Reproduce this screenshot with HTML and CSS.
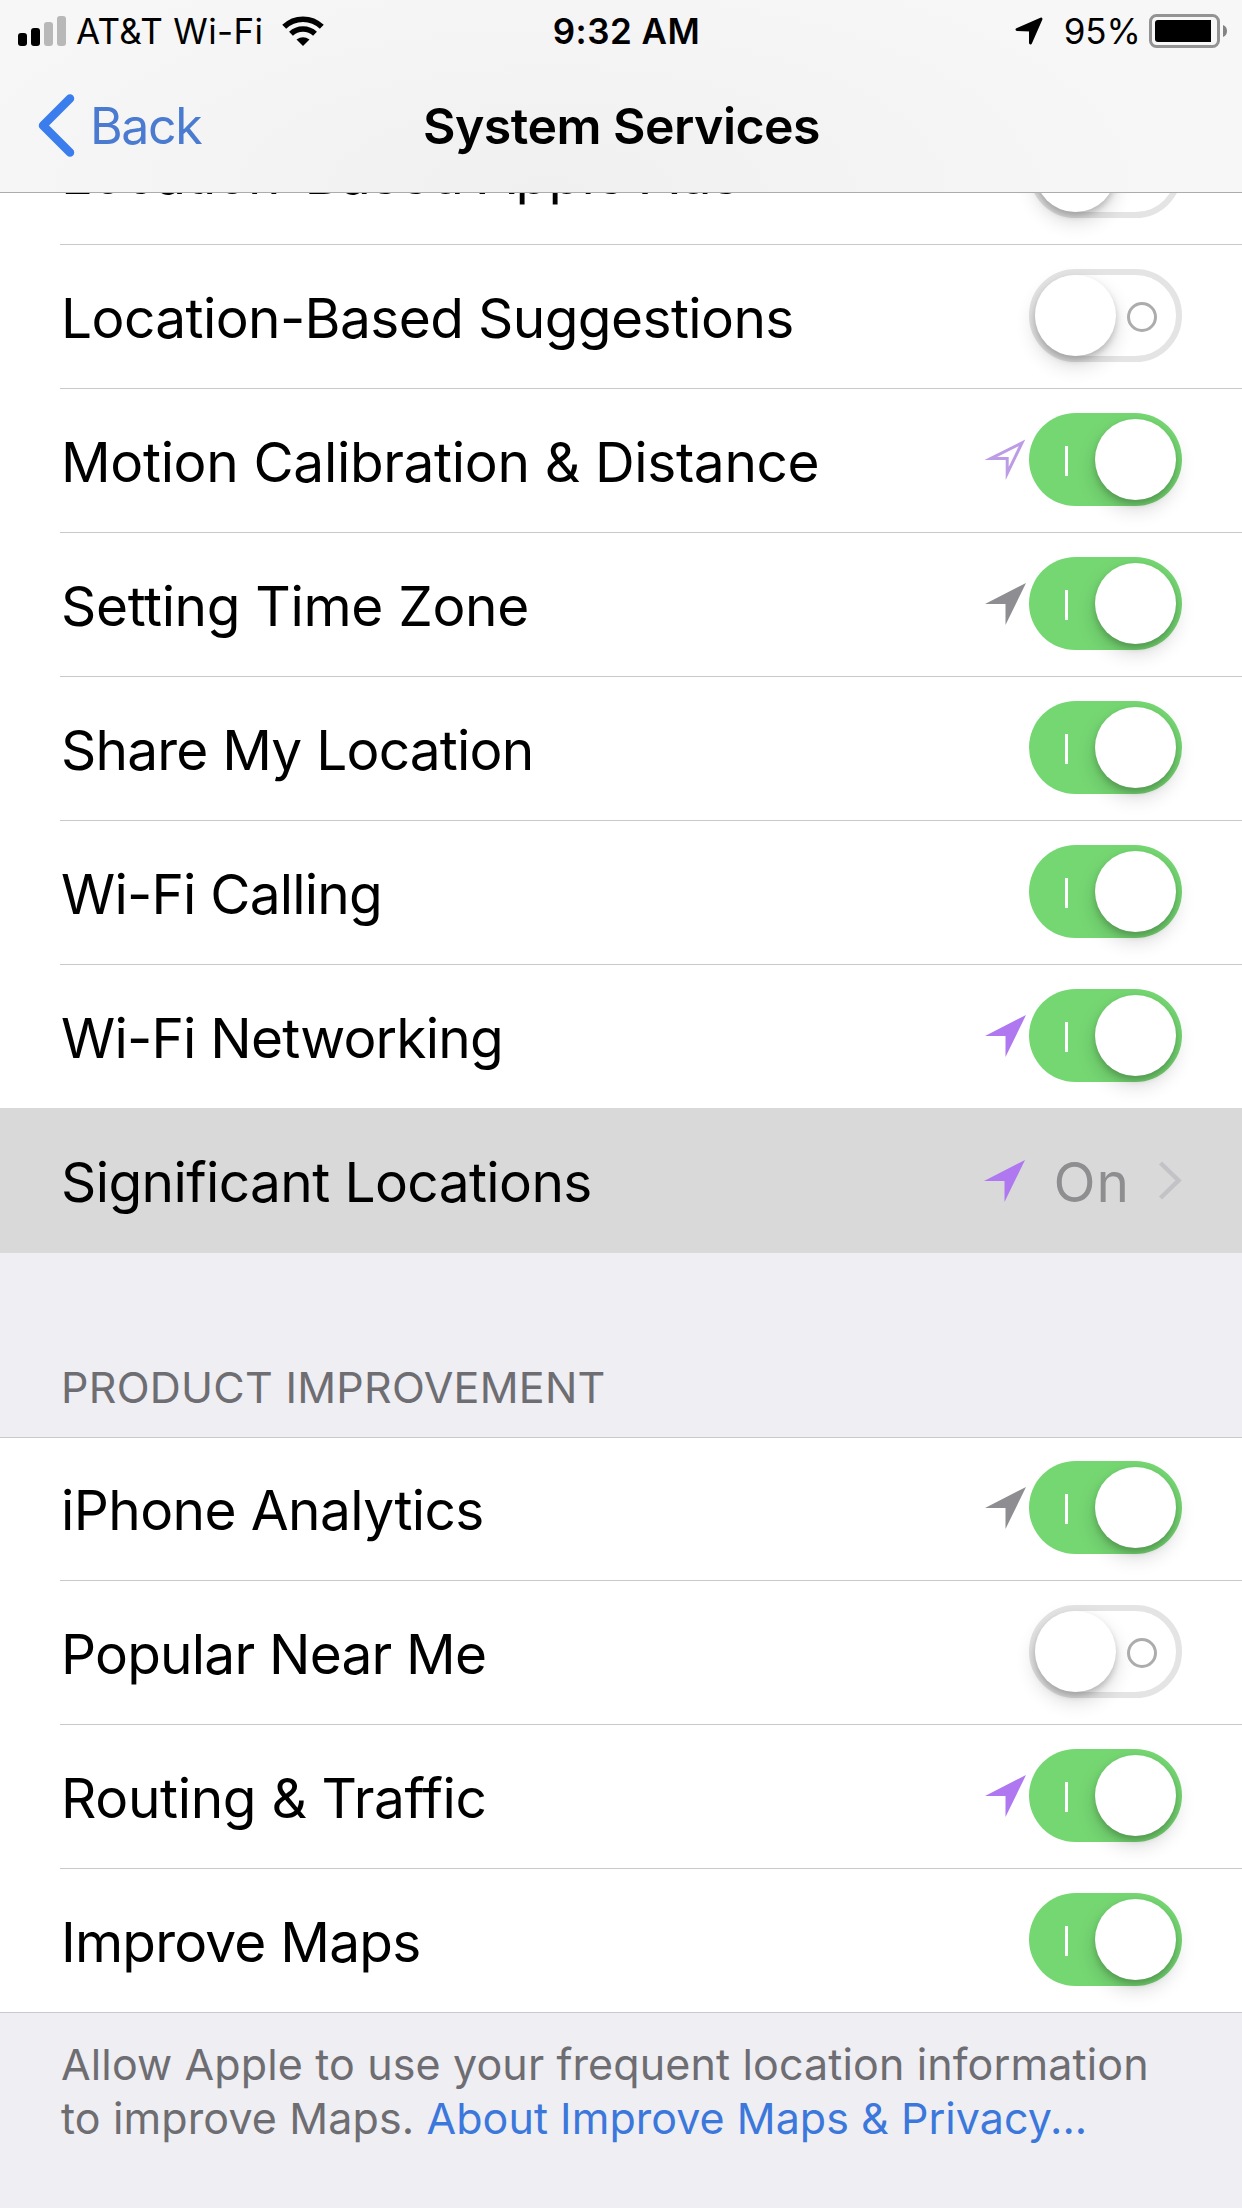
FILE: index.html
```html
<!DOCTYPE html>
<html lang="en">
  <head>
    <meta charset="UTF-8" />
    <meta name="viewport" content="width=device-width, initial-scale=1.0" />
    <title>System Services</title>
    <link rel="stylesheet" href="styles.css">
  </head>

  <body>
    <svg class="defs" width="0" height="0">
      <symbol id="arrow" viewBox="0 0 42 42">
        <path d="M0 21 L41 0 L20.500 42 V21 Z" />
      </symbol>
    </svg>

    <header class="top">
      <div class="status-bar">
        <div class="status-left">
          <svg class="signal" width="49" height="30" viewBox="0 0 49 30">
            <rect x="0" y="17" width="9" height="13" rx="3" />
            <rect x="13" y="12" width="9" height="18" rx="3" />
            <rect x="26" y="6" width="9" height="24" rx="3" fill="#b8b8b8" />
            <rect x="39" y="0" width="9" height="30" rx="3" fill="#b8b8b8" />
          </svg>
          <span class="carrier">AT&amp;T Wi-Fi</span>
          <svg class="wifi" width="42" height="30" viewBox="0 0 42 30">
            <path d="M2.200 10.800 A27 27 0 0 1 39.800 10.800" fill="none" stroke="#000" stroke-width="5.600" />
            <path d="M9 17.800 A17.500 17.500 0 0 1 33 17.800" fill="none" stroke="#000" stroke-width="5.600" />
            <path d="M14.500 23.500 Q21 18.800 27.500 23.500 L21 30 Z" />
          </svg>
        </div>
        <div class="time">9:32 AM</div>
        <div class="status-right">
          <svg class="nav-arrow" width="28" height="28" viewBox="0 0 28 28">
            <path d="M2 12.500 L26 2 L15.500 26 V13 Z" stroke="#000" stroke-width="3" stroke-linejoin="round" />
          </svg>
          <span class="percent">95%</span>
          <svg class="battery" width="79" height="34" viewBox="0 0 79 34">
            <rect x="1.500" y="1.500" width="68" height="31" rx="6" fill="none" stroke="#939393" stroke-width="3" />
            <path d="M9 6 H62 V28 H9 Q6 28 6 25 V9 Q6 6 9 6 Z" />
            <path d="M74 11 Q78 12.500 78 17 Q78 21.500 74 23 Z" fill="#848484" />
          </svg>
        </div>
      </div>
      <div class="nav-bar">
        <a class="back">
          <svg width="37" height="64" viewBox="0 0 37 64">
            <path d="M32 4.500 L5 31.500 L32 58.500" fill="none" stroke="#3b7ded" stroke-width="8.500" stroke-linecap="round" stroke-linejoin="round" />
          </svg>
          <span>Back</span>
        </a>
        <h1>System Services</h1>
      </div>
    </header>

    <main>
      <ul class="list">
        <li class="row">
          <span class="label">Location-Based Apple Ads</span>
          <span class="toggle"></span>
        </li>
        <li class="row">
          <span class="label">Location-Based Suggestions</span>
          <span class="toggle"></span>
        </li>
        <li class="row">
          <span class="label wide">Motion Calibration &amp; Distance</span>
          <svg class="arrow" viewBox="0 0 42 42">
            <path d="M6 19.400 L37 3.900 L22.200 34.500 V19.400 Z" fill="none" stroke="#bd9ce6" stroke-width="3" stroke-miterlimit="10" />
          </svg>
          <span class="toggle on"></span>
        </li>
        <li class="row">
          <span class="label wide">Setting Time Zone</span>
          <svg class="arrow gray"><use href="#arrow" /></svg>
          <span class="toggle on"></span>
        </li>
        <li class="row">
          <span class="label tight">Share My Location</span>
          <span class="toggle on"></span>
        </li>
        <li class="row">
          <span class="label tight">Wi-Fi Calling</span>
          <span class="toggle on"></span>
        </li>
        <li class="row before-selected">
          <span class="label tight">Wi-Fi Networking</span>
          <svg class="arrow purple"><use href="#arrow" /></svg>
          <span class="toggle on"></span>
        </li>
        <li class="row selected">
          <span class="label">Significant Locations</span>
          <svg class="arrow purple"><use href="#arrow" /></svg>
          <span class="value">On</span>
          <svg class="chevron" width="25" height="39" viewBox="0 0 25 39">
            <path d="M2.500 2 L20.500 19.500 L2.500 37" fill="none" stroke="#c3c3c7" stroke-width="4.500" />
          </svg>
        </li>
      </ul>

      <h2 class="section-title">Product Improvement</h2>

      <ul class="list">
        <li class="row">
          <span class="label">iPhone Analytics</span>
          <svg class="arrow gray"><use href="#arrow" /></svg>
          <span class="toggle on"></span>
        </li>
        <li class="row">
          <span class="label tight">Popular Near Me</span>
          <span class="toggle"></span>
        </li>
        <li class="row">
          <span class="label wide">Routing &amp; Traffic</span>
          <svg class="arrow purple"><use href="#arrow" /></svg>
          <span class="toggle on"></span>
        </li>
        <li class="row">
          <span class="label tight">Improve Maps</span>
          <span class="toggle on"></span>
        </li>
      </ul>

      <p class="footnote">
        Allow Apple to use your frequent location information<br />
        to improve Maps. <a>About Improve Maps &amp; Privacy...</a>
      </p>
    </main>
  </body>
</html>
```
FILE: styles.css
```css
*,
*::before,
*::after {
  box-sizing: border-box;
}

body {
  margin: 0;
  width: 1242px;
  height: 2208px;
  overflow: hidden;
  font-family: Inter, "Liberation Sans", sans-serif;
  color: #000;
  background: #efeef3;
}

.defs {
  position: absolute;
}

/* top bars, lying over the scrolled list */
.top {
  position: absolute;
  top: 0;
  left: 0;
  z-index: 1;
  width: 1242px;
  height: 193px;
  border-bottom: 1px solid #acacac;
  background: radial-gradient(ellipse 640px 260px at 44% 100%, #f0f0f0, #f7f7f7);
}

.status-bar {
  display: grid;
  grid-template-columns: 1fr auto 1fr;
  align-items: center;
  height: 60px;
  padding: 0 14px 0 18px;
  font-size: 35px;
  line-height: 62px;
}

.status-left,
.status-right {
  display: flex;
  align-items: center;
}

.status-right {
  justify-content: flex-end;
}

.carrier {
  margin-left: 9px;
  letter-spacing: 0.35px;
}

.wifi {
  margin-left: 19px;
}

.time {
  padding-left: 7px;
  font-weight: 600;
  letter-spacing: 0.5px;
}

.nav-arrow {
  margin-right: 21px;
}

.percent {
  margin-right: 8px;
}

.nav-bar {
  display: grid;
  grid-template-columns: 1fr auto 1fr;
  align-items: center;
  height: 132px;
  padding: 0 38px;
}

.back {
  display: flex;
  align-items: center;
  gap: 15px;
  font-size: 50px;
  letter-spacing: -1.4px;
  color: #4a7bd0;
}

h1 {
  margin: 0;
  padding-left: 1px;
  font-size: 50px;
  font-weight: 600;
  letter-spacing: -0.54px;
}

main {
  padding-top: 101px;
}

.list {
  margin: 0;
  padding: 0;
  list-style: none;
  background: #fff;
}

.row {
  display: flex;
  align-items: center;
  height: 144px;
  margin-left: 60px;
  padding-right: 60px;
  border-bottom: 1px solid #c9c8cc;
}

.label {
  flex: 1;
  padding: 3px 0 0 1px;
  font-size: 55px;
  letter-spacing: -0.6px;
  white-space: nowrap;
}

.label.wide {
  letter-spacing: -0.34px;
}

.label.tight {
  letter-spacing: -0.8px;
}

/* full-width rows */
.row.before-selected,
.row.selected,
.row:last-child {
  margin-left: 0;
  padding-left: 60px;
}

.row.before-selected {
  border-bottom-color: #d9d9d9;
}

.row.selected {
  border-bottom: none;
  background: #d9d9d9;
}

.selected .label {
  padding-top: 2px;
}

.arrow {
  width: 42px;
  height: 42px;
  margin: 0 2px 2px 0;
}

.gray {
  fill: #8e8e92;
}

.purple {
  fill: #b078f0;
}

.selected .arrow {
  margin: 0 27px 0 0;
}

.value {
  padding-top: 2px;
  font-size: 55px;
  letter-spacing: 1px;
  color: #8e8e90;
}

.chevron {
  margin: 0 -1px 2px 28px;
}

.toggle {
  position: relative;
  width: 153px;
  height: 93px;
  margin-bottom: 2px;
  border: 6px solid #e4e4e4;
  border-radius: 47px;
  background: #fff;
}

/* knob */
.toggle::before {
  content: "";
  position: absolute;
  top: 0;
  left: 0;
  width: 81px;
  height: 81px;
  border-radius: 50%;
  background: #fff;
  box-shadow: 0 9px 20px rgba(0, 0, 0, 0.16), 0 4px 6px rgba(0, 0, 0, 0.18);
}

/* on/off mark */
.toggle::after {
  content: "";
  position: absolute;
  top: 27px;
  right: 19px;
  width: 30px;
  height: 30px;
  border: 3px solid #acacac;
  border-radius: 50%;
}

.toggle.on {
  border-color: transparent;
  background: #75d772 border-box;
}

.toggle.on::before {
  left: 60px;
}

.toggle.on::after {
  left: 30px;
  width: 3px;
  border: none;
  border-radius: 0;
  background: #fff;
}

/* the bottom line lies on the first pixel row of the next list */
.section-title {
  position: relative;
  height: 185px;
  margin: 0 0 -1px;
  padding: 107px 61px 0;
  border-bottom: 1px solid #c9c8cc;
  font-size: 43px;
  font-weight: 400;
  line-height: 54px;
  letter-spacing: 0.26px;
  text-transform: uppercase;
  color: #6d6d72;
}

.footnote {
  margin: 0;
  padding: 24px 61px 0;
  font-size: 43px;
  line-height: 54px;
  letter-spacing: 0.13px;
  color: #6d6d72;
}

.footnote a {
  letter-spacing: 0.03px;
  color: #3c78dc;
}
```
